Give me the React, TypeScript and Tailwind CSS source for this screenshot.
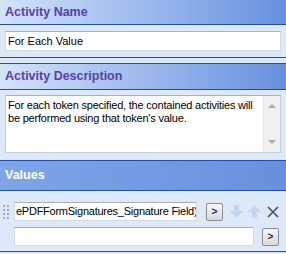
const FONT = "font-['Liberation_Sans',Arial,sans-serif]";

function SectionHeader({ title, active, tall }: { title: string; active?: boolean; tall?: boolean }) {
  return (
    <div
      className={
        "flex items-center px-[5px] text-[12.5px] font-bold border-b border-[#1d4fb3] " +
        (active
          ? "h-[30px] bg-gradient-to-r from-[#7fa4e8] to-[#6890de] text-white"
          : (tall ? "h-[26px] " : "h-[25px] ") +
            "bg-gradient-to-r from-[#d3e3f9] to-[#6890de] text-[#5b3fad]")
      }
    >
      {title}
    </div>
  );
}

function SmallButton() {
  return (
    <button className="w-[17px] h-[18px] shrink-0 flex items-center justify-center rounded-[2px] border border-[#8a8f96] bg-gradient-to-b from-[#f7f7f7] to-[#d9d9d9] text-[10px] leading-none text-[#1a2a6a] font-bold">
      &gt;
    </button>
  );
}

function Grip() {
  return (
    <div className="grid grid-cols-2 gap-[2px] w-[6px] shrink-0">
      {Array.from({ length: 8 }).map((_, i) => (
        <span key={i} className="w-[2px] h-[2px] bg-[#a3adbb]" />
      ))}
    </div>
  );
}

function ArrowDown({ up }: { up?: boolean }) {
  return (
    <svg width="15" height="15" viewBox="0 0 15 15" className={up ? "rotate-180" : ""}>
      <path d="M5 1h5v6h4.5l-7 7-7-7h4.5z" fill="#c3d5ef" />
    </svg>
  );
}

export default function App() {
  return (
    <div className={`w-[286px] h-[254px] bg-[#dde9f8] overflow-hidden ${FONT}`}>
      {/* Activity Name */}
      <SectionHeader title="Activity Name" />
      <div className="h-[33px] px-[5px] pt-[6px] border-b border-[#1d4fb3]">
        <div className="h-[20px] bg-white border border-[#d4dbe5] border-t-[#a9b0bb] flex items-center px-[2px] text-[11px] text-black">
          For Each Value
        </div>
      </div>

      {/* Activity Description */}
      <div className="mt-[5px] border-t border-[#1d4fb3]">
        <SectionHeader title="Activity Description" tall />
        <div className="h-[71px] px-[5px] pt-[5px] border-b border-[#1d4fb3]">
          <div className="h-[58px] bg-white border border-[#c6ced9] border-t-[#a9b0bb] flex">
            <p className="flex-1 px-[2px] pt-[3px] text-[11px] leading-[13px] tracking-[-0.2px] text-black">
              For each token specified, the contained activities will be performed using that token's value.
            </p>
            <div className="w-[17px] bg-[#f0f0f0] border-l border-[#e6e6e6] flex flex-col items-center justify-between py-[8px]">
              <span className="w-0 h-0 border-l-[4px] border-r-[4px] border-b-[4px] border-l-transparent border-r-transparent border-b-[#a6a6a6]" />
              <span className="w-0 h-0 border-l-[4px] border-r-[4px] border-t-[4px] border-l-transparent border-r-transparent border-t-[#a6a6a6]" />
            </div>
          </div>
        </div>
      </div>

      {/* Values */}
      <SectionHeader title="Values" active />
      <div className="h-[61px] border-b border-[#1d4fb3] pt-[11px] flex flex-col gap-[6px]">
        <div className="flex items-center pl-[3px]">
          <Grip />
          <div className="ml-[5px] w-[183px] h-[19px] bg-white border border-[#d4dbe5] border-t-[#a9b0bb] flex items-center px-[1px] text-[11px] tracking-[-0.25px] text-black whitespace-nowrap overflow-hidden">
            ePDFFormSignatures_Signature Field)
          </div>
          <div className="ml-[9px]">
            <SmallButton />
          </div>
          <div className="ml-[6px] flex items-center gap-[3px]">
            <ArrowDown />
            <ArrowDown up />
          </div>
          <svg width="14" height="14" viewBox="0 0 14 14" className="ml-[4px]">
            <path d="M2 2l10 10M12 2L2 12" stroke="#505050" strokeWidth="1.6" />
          </svg>
        </div>
        <div className="flex items-center pl-[14px]">
          <div className="w-[240px] h-[19px] bg-white border border-[#d4dbe5] border-t-[#a9b0bb]" />
          <div className="ml-[8px]">
            <SmallButton />
          </div>
        </div>
      </div>
    </div>
  );
}
